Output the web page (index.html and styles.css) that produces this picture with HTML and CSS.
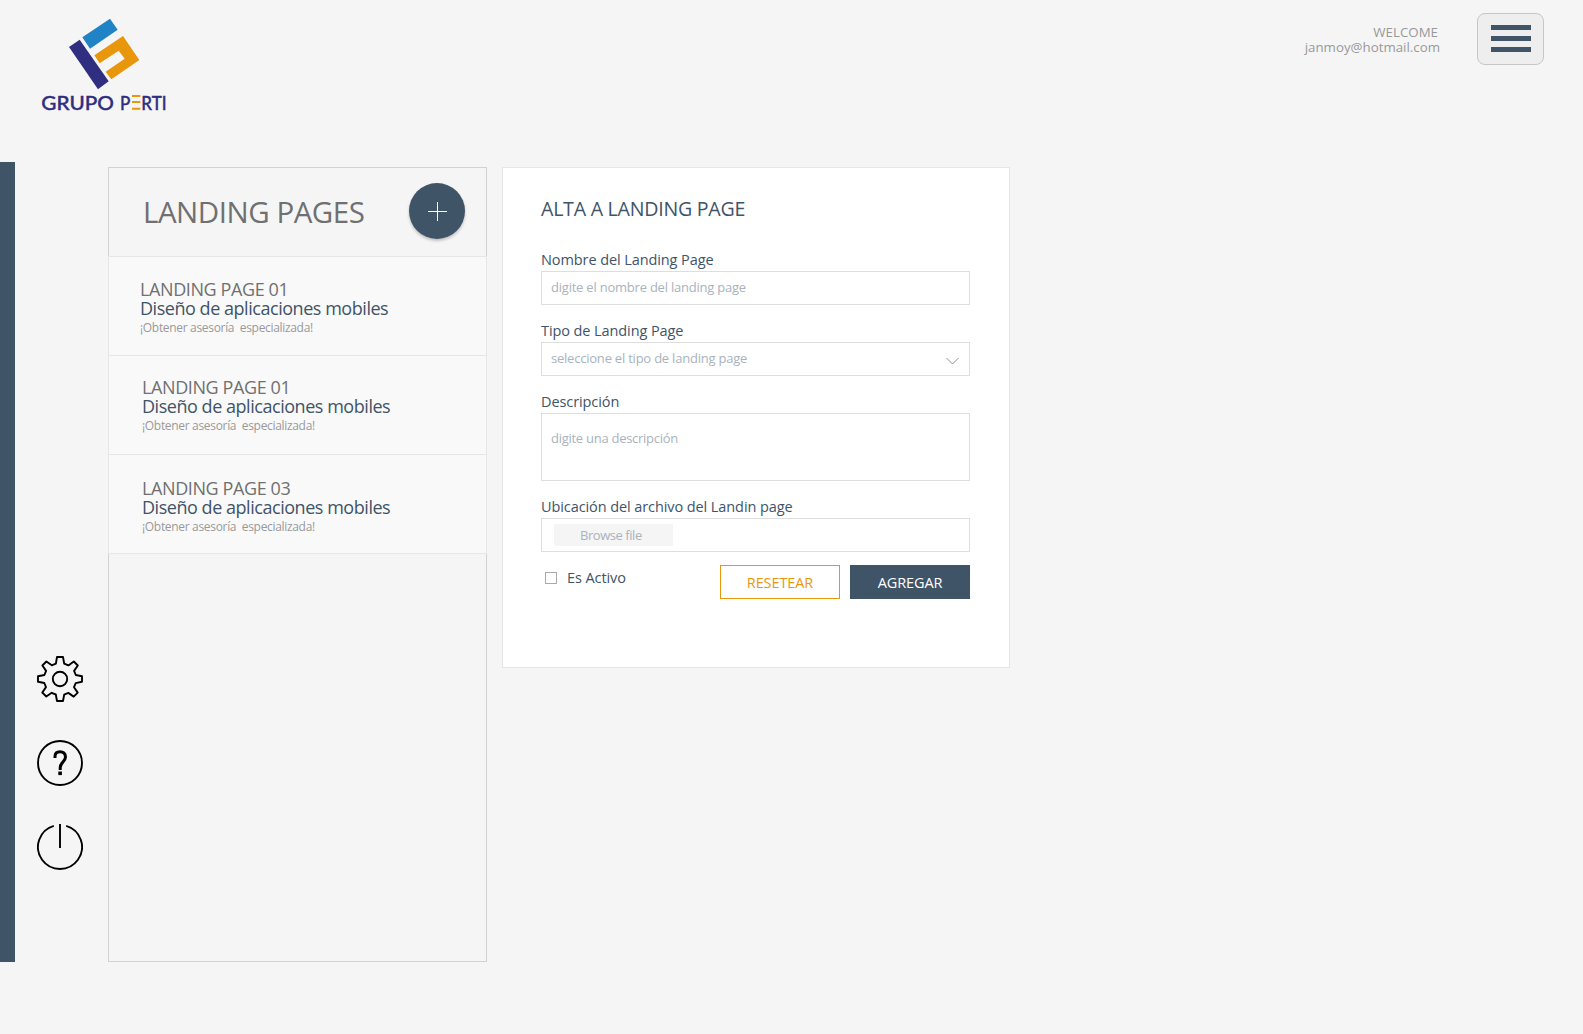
FILE: index.html
```html
<!DOCTYPE html>
<html lang="es">
<head>
<meta charset="utf-8">
<title>Grupo Perti - Landing Pages</title>
<link rel="stylesheet" href="styles.css">
</head>
<body>
<header class="top">
  <svg class="logo" viewBox="0 0 450 330" role="img" aria-label="Grupo Perti">
    <path fill="#2083c6" d="M157 82 240 26 263 59 180 116z"/>
    <path fill="#2f2e80" d="M117 111 149 89 236 214 204 238z"/>
    <path fill="#e8960c" d="M193 136 279 78 328 150 244 208 227 185 284 146 266 122 209 160z"/>
    <text class="logo-text" x="34" y="299" textLength="218" lengthAdjust="spacingAndGlyphs">GRUPO</text>
    <text class="logo-text" x="270" y="299" textLength="31" lengthAdjust="spacingAndGlyphs">P</text>
    <text class="logo-text" x="334" y="299" textLength="76" lengthAdjust="spacingAndGlyphs">RTI</text>
    <path fill="#e8960c" d="M306 255h25v6h-25zM306 273h25v6h-25zM306 293h25v6h-25z"/>
  </svg>
  <div class="account">
    <div class="user">
      <span class="welcome">WELCOME</span>
      <span class="mail">janmoy@hotmail.com</span>
    </div>
    <button class="menu" aria-label="Menu"><i></i><i></i><i></i></button>
  </div>
</header>
<main class="main">
  <div class="bar"></div>
  <nav class="tools">
    <svg viewBox="0 0 46 46"><g fill="none" stroke="#000" stroke-width="1.900" stroke-linejoin="round"><path d="M20 1h6l1.200 6.600 4.200 1.800L36.800 5.500l4 4-3.700 5.400 1.700 4.100L45 20.200v5.600l-6.300 1.300-1.700 4.100 3.700 5.400-4 4-5.400-3.700-4.100 1.700L26 45h-6l-1.200-6.500-4.100-1.700-5.400 3.700-4-4 3.700-5.400-1.700-4.100L1 25.800v-5.600l6.400-1.200 1.700-4.100-3.700-5.400 4-4 5.400 3.800 4.100-1.700z"/><circle cx="23" cy="23" r="7.200"/></g></svg>
    <svg viewBox="0 0 46 46"><g fill="none" stroke="#000"><circle cx="23" cy="23" r="22" stroke-width="1.900"/><path stroke-width="3" d="M18 18v-1.500C18 13 20 11.700 23 11.700s5.500 1.700 5.500 5.300c0 4.500-5.300 5.500-5.300 10.500V30"/></g><path d="M21.300 31.500h3.600v3.600h-3.600z"/></svg>
    <svg viewBox="0 0 46 46"><path fill="none" stroke="#000" stroke-width="1.900" d="M23 0v24M16.800 1.900a22 22 0 1 0 12.400 0"/></svg>
  </nav>
  <section class="list">
    <div class="list-head">
      <h1>LANDING PAGES</h1>
      <button class="add" aria-label="Agregar"><svg viewBox="0 0 19 19"><path stroke="#fff" d="M0 9.500h19M9.500 0v19"/></svg></button>
    </div>
    <article class="item first"><p class="name">LANDING PAGE 01</p><p class="desc">Diseño de aplicaciones mobiles</p><p class="cta">¡Obtener asesoría&nbsp; especializada!</p></article>
    <article class="item second"><p class="name">LANDING PAGE 01</p><p class="desc">Diseño de aplicaciones mobiles</p><p class="cta">¡Obtener asesoría&nbsp; especializada!</p></article>
    <article class="item third"><p class="name">LANDING PAGE 03</p><p class="desc">Diseño de aplicaciones mobiles</p><p class="cta">¡Obtener asesoría&nbsp; especializada!</p></article>
  </section>
  <form class="form">
    <h2>ALTA A LANDING PAGE</h2>
    <label class="label">Nombre del Landing Page</label>
    <div class="field">digite el nombre del landing page</div>
    <label class="label">Tipo de Landing Page</label>
    <div class="field select">seleccione el tipo de landing page<svg viewBox="0 0 13 8"><path fill="none" stroke="#8f8f8f" d="M.5 1l6 6 6-6"/></svg></div>
    <label class="label">Descripción</label>
    <div class="field area">digite una descripción</div>
    <label class="label">Ubicación del archivo del Landin page</label>
    <div class="field file"><span class="browse">Browse file</span></div>
    <div class="actions">
      <label class="check"><i></i>Es Activo</label>
      <span class="btn reset">RESETEAR</span>
      <span class="btn submit">AGREGAR</span>
    </div>
  </form>
</main>
</body>
</html>
```
FILE: styles.css
```css
* { box-sizing: border-box; }
body { margin: 0; width: 1583px; height: 1034px; overflow: hidden; background: #f5f5f5; font-family: "Open Sans", "Noto Sans", sans-serif; color: #405468; }
h1, h2, p { margin: 0; font-weight: 400; }
button { padding: 0; }
.top { height: 162px; display: flex; justify-content: space-between; padding: 10px 39px 0 30px; }
.logo { width: 150px; height: 110px; }
.logo-text { font: 500 59px Lato, sans-serif; fill: #2f2e80; stroke: #2f2e80; stroke-width: 1.2px; }
.account { display: flex; align-items: flex-start; padding-top: 3px; gap: 37px; }
.user { display: flex; flex-direction: column; align-items: flex-end; padding-top: 12px; font-size: 13.300px; line-height: 15px; color: #999; }
.welcome { margin-right: 2px; }
.menu { width: 67px; height: 52px; border: 1px solid #c6c6c6; border-radius: 8px; background: #eee; display: flex; flex-direction: column; align-items: center; gap: 6px; padding-top: 11px; }
.menu i { width: 40px; height: 5px; background: #405468; }
.main { display: flex; height: 800px; }
.bar { width: 15px; background: #405468; }
.tools { width: 93px; padding: 494px 0 0 22px; display: flex; flex-direction: column; gap: 38px; }
.tools svg { width: 46px; height: 46px; }
.list { width: 379px; height: 795px; margin-top: 5px; border: 1px solid #d2d2d2; }
.list-head { height: 88px; display: flex; justify-content: space-between; align-items: flex-start; padding: 15px 21px 0 34px; }
.list-head h1 { font-size: 29.500px; line-height: 58px; letter-spacing: -.48px; color: #707070; }
.add { width: 56px; height: 56px; border: 0; border-radius: 50%; background: #405468; box-shadow: 0 2px 3px rgba(0,0,0,.22); display: flex; align-items: center; justify-content: center; }
.add svg { width: 19px; height: 19px; }
.item { height: 99px; margin: 0 -1px; border: 1px solid #e6e6e6; border-bottom: 0; background: #f9f9f9; padding-left: 33px; }
.first { padding: 23px 0 0 31px; }
.second { padding-top: 22px; }
.third { height: 100px; padding-top: 24px; border-bottom: 1px solid #e6e6e6; }
.name { font-size: 18px; line-height: 19px; letter-spacing: -.4px; color: #707070; }
.desc { font-size: 18px; line-height: 19px; letter-spacing: -.46px; }
.cta { font-size: 12px; line-height: 19px; letter-spacing: -.32px; color: #999; }
.form { width: 508px; height: 501px; margin: 5px 0 0 15px; border: 1px solid #e6e6e6; background: #fff; padding: 27px 39px 0 38px; }
.form h2 { font-size: 19.600px; line-height: 28px; letter-spacing: -.25px; margin-bottom: 27px; }
.label { display: block; font-size: 14.500px; line-height: 20px; letter-spacing: -.09px; padding-bottom: 1px; }
.field { height: 34px; border: 1px solid #dedede; margin-bottom: 16px; padding: 0 9px 2px; display: flex; align-items: center; font-size: 13px; line-height: 30px; letter-spacing: -.22px; color: #a9b3bd; }
.select { justify-content: space-between; padding-right: 10px; }
.select svg { width: 13px; height: 8px; margin-top: 6px; }
.area { height: 68px; align-items: flex-start; padding-top: 9px; letter-spacing: -.27px; }
.file { padding: 0 0 0 12px; margin-bottom: 13px; }
.browse { width: 119px; height: 22px; background: #f5f5f5; padding-left: 26px; line-height: 23px; letter-spacing: -.45px; }
.actions { display: flex; gap: 10px; }
.check { flex: 1; display: flex; align-items: center; gap: 10px; height: 26px; padding-left: 4px; font-size: 14.500px; line-height: 24px; letter-spacing: -.09px; padding-bottom: 1px; }
.check i { width: 12px; height: 12px; border: 1px solid #aaa; }
.btn { width: 120px; height: 34px; border: 1px solid #e8960c; color: #e8960c; font-size: 14.500px; line-height: 34px; letter-spacing: -.1px; text-align: center; }
.submit { border-color: #405468; background: #405468; color: #fff; }
```
